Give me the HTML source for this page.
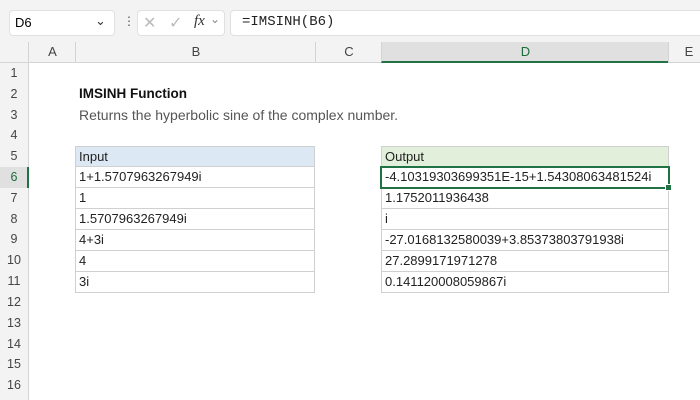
<!DOCTYPE html><html><head><style>
body{margin:0;width:700px;height:400px;background:#fff;font-family:"Liberation Sans",sans-serif;position:relative;overflow:hidden}
.a{position:absolute}
.top{left:0;top:0;width:700px;height:42px;background:#f3f3f3}
.box{background:#fff;border:1px solid #e0e0e0;border-radius:4px;height:24px;top:10px}
.hdr{top:42px;height:20px;background:#f3f3f3;border-bottom:1px solid #d4d4d4;font-size:13px;color:#444;text-align:center;line-height:20px}
.rn{left:0;width:28px;background:#f3f3f3;font-size:12.5px;color:#444;text-align:center;border-right:1px solid #d4d4d4}
.c{font-size:13px;color:#222;line-height:20px;padding-left:3px;box-sizing:border-box;border:1px solid #d0d0d0;border-top:none;white-space:nowrap}
</style></head><body>
<div class="a top"></div>
<div class="a box" style="left:9px;width:104px"><span class="a" style="left:5px;top:4px;font-size:13px">D6</span><span class="a" style="left:85px;top:2px;font-size:13px;color:#333">&#8964;</span></div>
<div class="a" style="left:123px;top:14px;font-size:12px;color:#555">&#8942;</div>
<div class="a box" style="left:137px;width:86px"><span class="a" style="left:5px;top:2px;font-size:16px;color:#bbb">&#10005;</span><span class="a" style="left:31px;top:2px;font-size:16px;color:#bbb">&#10003;</span><span class="a" style="left:56px;top:2px;font-size:15px;font-style:italic;font-family:'Liberation Serif',serif;color:#333">fx</span><span class="a" style="left:72px;top:1px;font-size:12px;color:#888">&#8964;</span></div>
<div class="a box" style="left:230px;width:480px"><span class="a" style="left:11px;top:3px;font-size:14px;font-family:'Liberation Mono',monospace;color:#222">=IMSINH(B6)</span></div>
<div class="a hdr" style="left:0;width:28px"></div>
<div class="a hdr" style="left:28px;width:47px;border-left:1px solid #d4d4d4">A</div>
<div class="a hdr" style="left:75px;width:240px;border-left:1px solid #d4d4d4">B</div>
<div class="a hdr" style="left:315px;width:66px;border-left:1px solid #d4d4d4">C</div>
<div class="a hdr" style="left:381px;width:287px;background:#e0e0e0;color:#1e6b3a;border-left:1px solid #d4d4d4;border-bottom:2px solid #217346;height:19px">D</div>
<div class="a hdr" style="left:668px;width:40px;border-left:1px solid #d4d4d4">E</div>
<div class="a" style="left:0;top:63px;width:28px;height:337px;background:#f3f3f3;border-right:1px solid #d4d4d4"></div>
<div class="a" style="left:0;top:167px;width:27px;height:21px;background:#e0e0e0;border-right:2px solid #217346"></div>
<script></script>
<div id="rows"></div>
<div class="a rn" style="top:63px;height:21px;line-height:21px;background:none;border:none">1</div>
<div class="a rn" style="top:84px;height:21px;line-height:21px;background:none;border:none">2</div>
<div class="a rn" style="top:105px;height:21px;line-height:21px;background:none;border:none">3</div>
<div class="a rn" style="top:125px;height:21px;line-height:21px;background:none;border:none">4</div>
<div class="a rn" style="top:146px;height:21px;line-height:21px;background:none;border:none">5</div>
<div class="a rn" style="top:167px;height:21px;line-height:21px;background:none;border:none;color:#1e6b3a">6</div>
<div class="a rn" style="top:188px;height:21px;line-height:21px;background:none;border:none">7</div>
<div class="a rn" style="top:209px;height:21px;line-height:21px;background:none;border:none">8</div>
<div class="a rn" style="top:229px;height:21px;line-height:21px;background:none;border:none">9</div>
<div class="a rn" style="top:250px;height:21px;line-height:21px;background:none;border:none">10</div>
<div class="a rn" style="top:271px;height:21px;line-height:21px;background:none;border:none">11</div>
<div class="a rn" style="top:292px;height:21px;line-height:21px;background:none;border:none">12</div>
<div class="a rn" style="top:313px;height:21px;line-height:21px;background:none;border:none">13</div>
<div class="a rn" style="top:334px;height:21px;line-height:21px;background:none;border:none">14</div>
<div class="a rn" style="top:354px;height:21px;line-height:21px;background:none;border:none">15</div>
<div class="a rn" style="top:375px;height:21px;line-height:21px;background:none;border:none">16</div>
<div class="a" style="left:79px;top:86px;font-size:13.5px;font-weight:bold;color:#111">IMSINH Function</div>
<div class="a" style="left:79px;top:107px;font-size:14px;color:#555">Returns the hyperbolic sine of the complex number.</div>
<div class="a" style="left:75px;top:146px;width:240px">
<div class="c" style="height:21px;background:#dde8f5;border-top:1px solid #d0d0d0">Input</div>
<div class="c" style="height:21px">1+1.5707963267949i</div>
<div class="c" style="height:21px">1</div>
<div class="c" style="height:21px">1.5707963267949i</div>
<div class="c" style="height:21px">4+3i</div>
<div class="c" style="height:21px">4</div>
<div class="c" style="height:21px">3i</div>
</div>
<div class="a" style="left:381px;top:146px;width:288px">
<div class="c" style="height:21px;background:#e2efda;border-top:1px solid #d0d0d0">Output</div>
<div class="c" style="height:21px">-4.10319303699351E-15+1.54308063481524i</div>
<div class="c" style="height:21px">1.1752011936438</div>
<div class="c" style="height:21px">i</div>
<div class="c" style="height:21px">-27.0168132580039+3.85373803791938i</div>
<div class="c" style="height:21px">27.2899171971278</div>
<div class="c" style="height:21px">0.141120008059867i</div>
</div>
<div class="a" style="left:380px;top:166px;width:286px;height:19px;border:2px solid #217346"></div>
<div class="a" style="left:665px;top:184px;width:5px;height:5px;background:#217346;border:1px solid #fff"></div>
</body></html>
